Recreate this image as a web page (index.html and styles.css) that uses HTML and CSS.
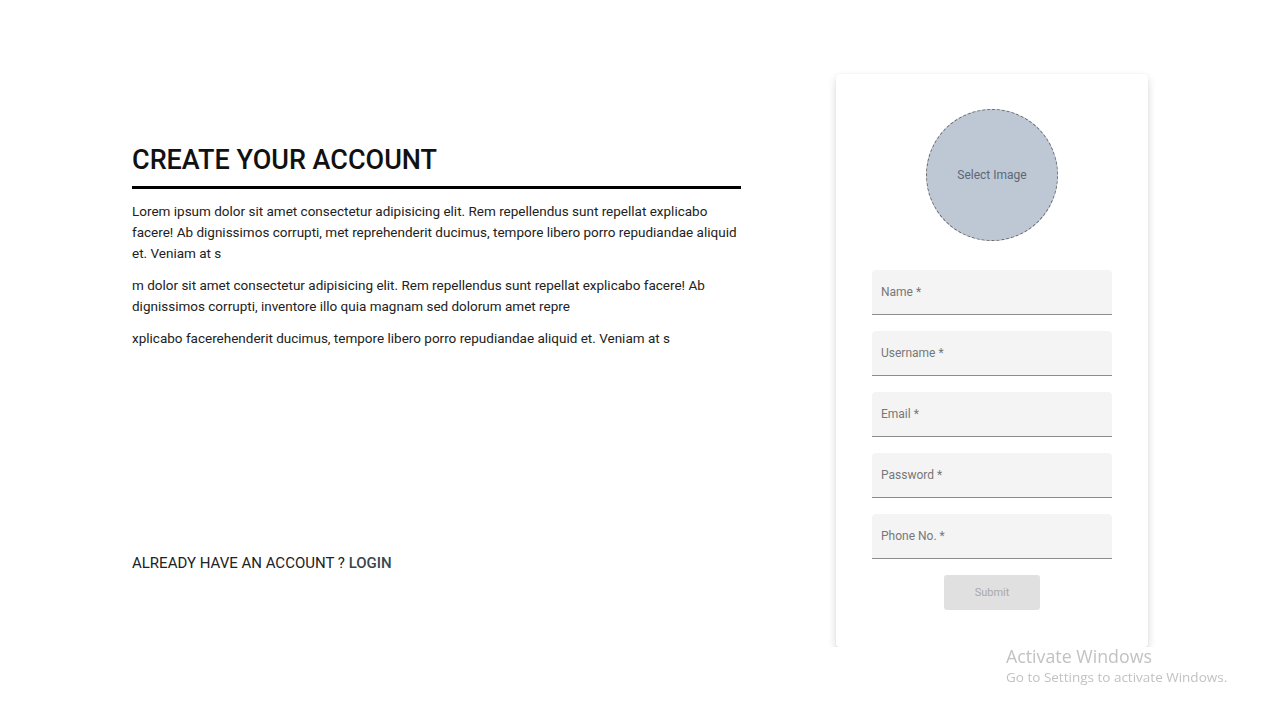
FILE: index.html
```html
<!DOCTYPE html>
<html lang="en">
<head>
  <meta charset="UTF-8" />
  <meta name="viewport" content="width=device-width, initial-scale=1.0"/>
  <title>Create your account</title>
  <link rel="stylesheet" href="styles.css">
</head>
<body>
  <div class="page">
    <div class="intro">
      <h2 class="intro-title">CREATE YOUR ACCOUNT</h2>
      <p>Lorem ipsum dolor sit amet consectetur adipisicing elit. Rem repellendus sunt repellat explicabo facere! Ab dignissimos corrupti, met reprehenderit ducimus, tempore libero porro repudiandae aliquid et. Veniam at s</p>
      <p>m dolor sit amet consectetur adipisicing elit. Rem repellendus sunt repellat explicabo facere! Ab dignissimos corrupti, inventore illo quia magnam sed dolorum amet repre</p>
      <p>xplicabo facerehenderit ducimus, tempore libero porro repudiandae aliquid et. Veniam at s</p>
      <div class="login-line">ALREADY HAVE AN ACCOUNT ? <a href="#" class="login-link">LOGIN</a></div>
    </div>

    <form class="card">
      <label class="avatar">
        <span>Select Image</span>
        <input type="file" accept="image/*" />
      </label>

      <div class="field"><span class="field-label">Name *</span></div>
      <div class="field"><span class="field-label">Username *</span></div>
      <div class="field"><span class="field-label">Email *</span></div>
      <div class="field"><span class="field-label">Password *</span></div>
      <div class="field"><span class="field-label">Phone No. *</span></div>

      <button type="button" class="submit" disabled>Submit</button>
    </form>
  </div>

  <div class="watermark">
    <div class="watermark-title">Activate Windows</div>
    <div class="watermark-sub">Go to Settings to activate Windows.</div>
  </div>
</body>
</html>
```

FILE: styles.css
```css
body {
  margin: 0;
  font-family: Roboto, "Liberation Sans", sans-serif;
  background: white;
  color: #212121;
}
.page {
  display: flex;
  align-items: stretch;
  gap: 95px;
  padding: 74px 0 0 132px;
}
.intro {
  width: 609px;
  display: flex;
  flex-direction: column;
  padding-top: 72px;
  padding-bottom: 75px;
}
.intro-title {
  margin: 0;
  font-size: 27px;
  font-weight: 500;
  line-height: 28px;
  color: #111;
  padding-bottom: 12px;
  border-bottom: 3px solid black;
}
.intro p {
  margin: 11px 0 0;
  font-size: 13.5px;
  line-height: 21px;
  color: #222;
}
.intro p:first-of-type {
  margin-top: 12px;
}
.login-line {
  margin-top: auto;
  font-size: 15px;
  color: #222;
}
.login-link {
  color: #37474f;
  font-weight: 500;
  text-decoration: none;
}
.card {
  width: 240px;
  padding: 35px 36px 37px;
  background: white;
  border-radius: 4px;
  box-shadow: 0 4px 8px rgba(0,0,0,0.16), 0 0 2px rgba(0,0,0,0.06);
  display: flex;
  flex-direction: column;
  align-items: center;
}
.avatar {
  width: 130px;
  height: 130px;
  border-radius: 50%;
  border: 1px dashed #6a6a6a;
  background: #bec8d5;
  display: flex;
  align-items: center;
  justify-content: center;
  font-size: 12px;
  color: #5c6776;
  margin-bottom: 29px;
  cursor: pointer;
}
.avatar input {
  display: none;
}
.field {
  width: 240px;
  height: 45px;
  background: #f4f4f4;
  border-bottom: 1px solid #8c8c8c;
  border-radius: 4px 4px 0 0;
  display: flex;
  align-items: center;
  padding-left: 9px;
  box-sizing: border-box;
  margin-bottom: 16px;
}
.field-label {
  font-size: 12px;
  color: #777;
}
.submit {
  width: 96px;
  height: 35px;
  border: none;
  border-radius: 3px;
  background: #e0e0e0;
  color: #a8a8a8;
  font-family: inherit;
  font-size: 11px;
}
.watermark {
  position: fixed;
  left: 1006px;
  top: 645px;
  font-family: "Open Sans", sans-serif;
  color: #c2c2c2;
}
.watermark-title {
  font-size: 17.8px;
  line-height: 22px;
}
.watermark-sub {
  font-size: 13.5px;
  line-height: 20px;
}
```
